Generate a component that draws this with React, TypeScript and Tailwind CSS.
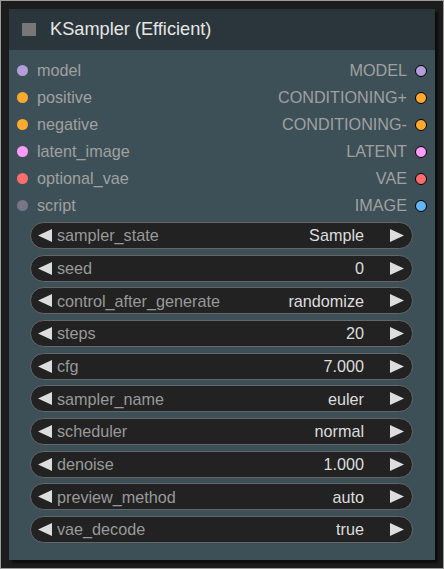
import React from "react";

const inputs = [
  { name: "model", color: "#b39ddb" },
  { name: "positive", color: "#ffa931" },
  { name: "negative", color: "#ffa931" },
  { name: "latent_image", color: "#ff9cf9" },
  { name: "optional_vae", color: "#ff6e6e" },
  { name: "script", color: "#767688" },
];

const outputs = [
  { name: "MODEL", color: "#b39ddb" },
  { name: "CONDITIONING+", color: "#ffa931" },
  { name: "CONDITIONING-", color: "#ffa931" },
  { name: "LATENT", color: "#ff9cf9" },
  { name: "VAE", color: "#ff6e6e" },
  { name: "IMAGE", color: "#64b5f6" },
];

const widgets = [
  ["sampler_state", "Sample"],
  ["seed", "0"],
  ["control_after_generate", "randomize"],
  ["steps", "20"],
  ["cfg", "7.000"],
  ["sampler_name", "euler"],
  ["scheduler", "normal"],
  ["denoise", "1.000"],
  ["preview_method", "auto"],
  ["vae_decode", "true"],
];

function Arrow({ dir }: { dir: "l" | "r" }) {
  return (
    <svg width="14" height="13" viewBox="0 0 14 13" className="shrink-0">
      {dir === "l" ? (
        <polygon points="14,0 14,13 0,6.5" fill="#ddd" />
      ) : (
        <polygon points="0,0 0,13 14,6.5" fill="#ddd" />
      )}
    </svg>
  );
}

export default function App() {
  return (
    <div
      className="w-[444px] h-[569px] border border-[#9a9a9a] bg-[#1c1c1c] pt-[8px] pl-[8px]"
      style={{ fontFamily: '"Liberation Sans", Arial, sans-serif' }}
    >
      <div className="w-[426px] h-[551px] bg-[#3e5057] shadow-[3px_3px_2px_rgba(0,0,0,0.6)] flex flex-col">
        <div className="h-[41px] bg-[#2a363b] flex items-center pl-[13px] shrink-0">
          <div className="w-[14px] h-[13px] bg-[#777] mr-[14px]" />
          <span className="text-[18.2px] text-[#e6e6e6] leading-none">KSampler (Efficient)</span>
        </div>
        <div className="flex pt-[7px] shrink-0">
          <div className="flex-1 flex flex-col">
            {inputs.map((s) => (
              <div key={s.name} className="h-[27px] flex items-center pl-[8px]">
                <div
                  className="w-[11px] h-[11px] rounded-full mr-[9px]"
                  style={{ backgroundColor: s.color }}
                />
                <span className="text-[16.2px] text-[#a0a0a0] leading-none">{s.name}</span>
              </div>
            ))}
          </div>
          <div className="flex-1 flex flex-col items-end">
            {outputs.map((s) => (
              <div key={s.name} className="h-[27px] flex items-center pr-[8px]">
                <span className="text-[16.2px] text-[#a0a0a0] leading-none mr-[8px]">{s.name}</span>
                <div
                  className="w-[12px] h-[12px] rounded-full border border-black"
                  style={{ backgroundColor: s.color }}
                />
              </div>
            ))}
          </div>
        </div>
        <div className="flex flex-col gap-[5.67px] pl-[21px] pt-[3px]">
          {widgets.map(([label, value]) => (
            <div
              key={label}
              className="w-[383px] h-[27px] rounded-full bg-[#222] border border-[#666] flex items-center pl-[7px] pr-[8px]"
            >
              <Arrow dir="l" />
              <span className="ml-[5px] text-[16.2px] text-[#999] leading-none">{label}</span>
              <span className="ml-auto text-[16.2px] text-[#ddd] leading-none mr-[26px]">{value}</span>
              <Arrow dir="r" />
            </div>
          ))}
        </div>
      </div>
    </div>
  );
}
